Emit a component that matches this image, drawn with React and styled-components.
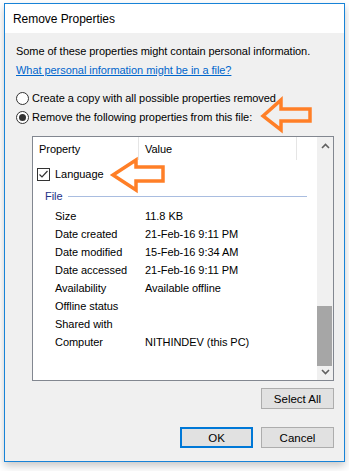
import React from 'react'
import styled, { createGlobalStyle } from 'styled-components'

const GlobalStyle = createGlobalStyle`
    html, body {
        margin: 0;
        padding: 0;
        background: #fff;
    }
    body {
        font-family: "Liberation Sans", Arial, sans-serif;
        font-size: 11px;
        letter-spacing: -0.05px;
        color: #000;
    }
`

const Page = styled.div`
    position: relative;
    width: 349px;
    height: 471px;
    padding: 3px 4px 0 4px;
    box-sizing: border-box;
`
const Window = styled.div`
    width: 341px;
    height: 459px;
    box-sizing: border-box;
    border: 1px solid #1883d7;
    background: #f0f0f0;
    display: flex;
    flex-direction: column;
    box-shadow: 0 4px 8px rgba(0, 0, 0, 0.22);
`
const TitleBar = styled.div`
    height: 29px;
    background: #fff;
    display: flex;
    align-items: center;
    padding-left: 8px;
    font-size: 12px;
    color: #000;
`
const Body = styled.div`
    flex: 1;
    display: flex;
    flex-direction: column;
    padding: 10px 10px 0 11px;
`
const Line = styled.div`
    line-height: 16px;
    height: 16px;
    white-space: nowrap;
    margin-top: ${p => p.gap || 0}px;
`
const Link = styled.a`
    color: #0066cc;
    text-decoration: underline;
    cursor: pointer;
`
const RadioRow = styled.label`
    display: flex;
    align-items: center;
    gap: 3px;
    height: 16px;
    line-height: 16px;
    white-space: nowrap;
    margin-top: ${p => p.gap || 0}px;
`
const Radio = styled.span`
    width: 13px;
    height: 13px;
    box-sizing: border-box;
    border: 1px solid #333;
    border-radius: 50%;
    background: #fff;
    display: flex;
    align-items: center;
    justify-content: center;
    &::after {
        content: '';
        display: ${p => (p.checked ? 'block' : 'none')};
        width: 7px;
        height: 7px;
        border-radius: 50%;
        background: #333;
    }
`
const ListBox = styled.div`
    margin: 11px 0 0 16px;
    width: 302px;
    height: 245px;
    box-sizing: border-box;
    border: 1px solid #828790;
    background: #fff;
    display: flex;
`
const ListMain = styled.div`
    flex: 1;
    display: flex;
    flex-direction: column;
`
const Header = styled.div`
    display: grid;
    grid-template-columns: 106px 158px 18px;
    height: 23px;
`
const HeaderCell = styled.div`
    display: flex;
    align-items: center;
    padding-left: 6px;
    border-right: ${p => (p.last ? 'none' : '1px solid #e5e5e5')};
    box-sizing: border-box;
`
const CheckRow = styled.label`
    display: flex;
    align-items: center;
    gap: 5px;
    height: 18px;
    margin-top: 5px;
    padding-left: 4px;
`
const CheckBox = styled.span`
    width: 13px;
    height: 13px;
    box-sizing: border-box;
    border: 1px solid #333;
    background: #fff;
    display: flex;
    align-items: center;
    justify-content: center;
`
const GroupRow = styled.div`
    display: flex;
    align-items: center;
    gap: 5px;
    height: 18px;
    margin-top: 4px;
    padding-left: 12px;
    padding-right: 10px;
    color: #1e3287;
`
const GroupLine = styled.div`
    flex: 1;
    height: 1px;
    background: #a9bde0;
`
const Rows = styled.div`
    margin-top: 2px;
    display: flex;
    flex-direction: column;
`
const Row = styled.div`
    display: grid;
    grid-template-columns: 90px 1fr;
    height: 18px;
    align-items: center;
    padding-left: 22px;
    white-space: nowrap;
`
const ScrollBar = styled.div`
    width: 16px;
    background: #f0f0f0;
    display: flex;
    flex-direction: column;
    align-items: center;
    justify-content: space-between;
    padding: 6px 0 5px;
    box-sizing: border-box;
`
const Track = styled.div`
    flex: 1;
    width: 100%;
    display: flex;
    flex-direction: column;
    justify-content: flex-end;
    padding: 0 0 3px;
`
const Thumb = styled.div`
    width: 15px;
    height: 60px;
    background: #a6a6a6;
`
const ButtonRow = styled.div`
    display: flex;
    justify-content: flex-end;
    gap: 8px;
    margin-top: ${p => p.gap}px;
`
const Button = styled.button`
    width: 73px;
    height: 21px;
    box-sizing: border-box;
    font-family: inherit;
    font-size: 11.5px;
    color: #000;
    background: #e1e1e1;
    border: ${p => (p.primary ? '2px solid #0078d7' : '1px solid #adadad')};
    padding: 0;
`
const Annotation = styled.svg`
    position: absolute;
    left: 0;
    top: 0;
    pointer-events: none;
`

const rows = [
    ['Size', '11.8 KB'],
    ['Date created', '21-Feb-16 9:11 PM'],
    ['Date modified', '15-Feb-16 9:34 AM'],
    ['Date accessed', '21-Feb-16 9:11 PM'],
    ['Availability', 'Available offline'],
    ['Offline status', ''],
    ['Shared with', ''],
    ['Computer', 'NITHINDEV (this PC)'],
]

const Chevron = ({ down }) => (
    <svg width="9" height="6" viewBox="0 0 9 6">
        <path
            d={down ? 'M1 1 L4.5 4.5 L8 1' : 'M1 5 L4.5 1.5 L8 5'}
            fill="none"
            stroke="#606060"
            strokeWidth="1.6"
        />
    </svg>
)

export default function App() {
    return (
        <Page>
            <GlobalStyle />
            <Window>
                <TitleBar>Remove Properties</TitleBar>
                <Body>
                    <Line>Some of these properties might contain personal information.</Line>
                    <Line gap={3}><Link>What personal information might be in a file?</Link></Line>
                    <RadioRow gap={12}><Radio />Create a copy with all possible properties removed</RadioRow>
                    <RadioRow gap={3}><Radio checked />Remove the following properties from this file:</RadioRow>
                    <ListBox>
                        <ListMain>
                            <Header>
                                <HeaderCell>Property</HeaderCell>
                                <HeaderCell>Value</HeaderCell>
                                <HeaderCell last />
                            </Header>
                            <CheckRow>
                                <CheckBox>
                                    <svg width="11" height="11" viewBox="0 0 11 11">
                                        <path d="M1.5 5.5 L4 8 L9.5 2" fill="none" stroke="#333" strokeWidth="1.2" />
                                    </svg>
                                </CheckBox>
                                Language
                            </CheckRow>
                            <GroupRow>File<GroupLine /></GroupRow>
                            <Rows>
                                {rows.map(([k, v]) => (
                                    <Row key={k}><span>{k}</span><span>{v}</span></Row>
                                ))}
                            </Rows>
                        </ListMain>
                        <ScrollBar>
                            <Chevron />
                            <Track><Thumb /></Track>
                            <Chevron down />
                        </ScrollBar>
                    </ListBox>
                    <ButtonRow gap={7}><Button>Select All</Button></ButtonRow>
                    <ButtonRow gap={18}>
                        <Button primary>OK</Button>
                        <Button>Cancel</Button>
                    </ButtonRow>
                </Body>
            </Window>
            <Annotation width="349" height="471">
                <g fill="none" stroke="#ff7f27" strokeWidth="3.5" strokeLinejoin="miter">
                    <polygon points="263,116 281,100 281,109 310,109 310,121 281,121 281,130" />
                    <polygon points="113,175 136,160 136,167 163,167 163,181 136,181 136,190" />
                </g>
            </Annotation>
        </Page>
    )
}
